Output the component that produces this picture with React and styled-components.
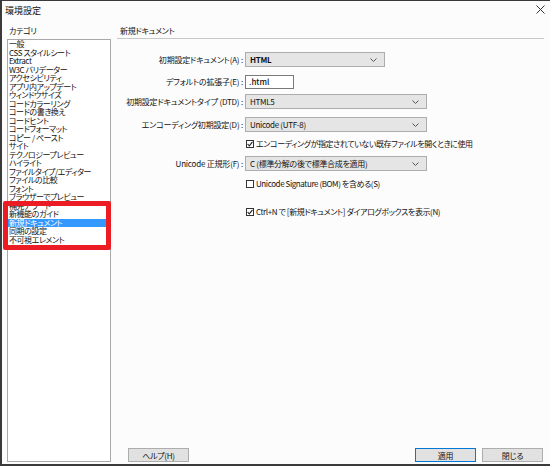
import React from 'react';
import styled, { createGlobalStyle } from 'styled-components';

const categories = [
  '一般',
  'CSS スタイルシート',
  'Extract',
  'W3C バリデーター',
  'アクセシビリティ',
  'アプリ内アップデート',
  'ウィンドウサイズ',
  'コードカラーリング',
  'コードの書き換え',
  'コードヒント',
  'コードフォーマット',
  'コピー / ペースト',
  'サイト',
  'テクノロジープレビュー',
  'ハイライト',
  'ファイルタイプ/エディター',
  'ファイルの比較',
  'フォント',
  'ブラウザーでプレビュー',
  '補完アラート',
  '新機能のガイド',
  '新規ドキュメント',
  '同期の設定',
  '不可視エレメント',
];

const SELECTED = '新規ドキュメント';

const Chevron = () => (
  <svg width="7" height="4" viewBox="0 0 7 4">
    <polyline points="0.5,0.5 3.5,3.5 6.5,0.5" fill="none" stroke="#555" strokeWidth="1" />
  </svg>
);

const Check = () => (
  <svg width="6" height="6" viewBox="0 0 6 6">
    <polyline points="0.6,3 2.3,4.9 5.5,0.8" fill="none" stroke="#222" strokeWidth="1.1" />
  </svg>
);

export default function App() {
  return (
    <>
      <GlobalStyle />
      <Window>
        <TitleBar>
          <WindowTitle>環境設定</WindowTitle>
          <CloseBox>
            <svg width="9" height="9" viewBox="0 0 9 9">
              <path d="M0.5 0.5 L8.5 8.5 M8.5 0.5 L0.5 8.5" stroke="#333" strokeWidth="1" />
            </svg>
          </CloseBox>
        </TitleBar>

        <Body>
          <Side>
            <SectionLabel>カテゴリ</SectionLabel>
            <ListBox>
              {categories.map((c) => (
                <Item key={c} $selected={c === SELECTED}>
                  {c}
                </Item>
              ))}
              <Marker />
            </ListBox>
          </Side>

          <Main>
            <PanelHeader>新規ドキュメント</PanelHeader>
            <Form>
              <Row $top={13}>
                <Label>初期設定ドキュメント(A) :</Label>
                <Select $w={140} $bold>
                  HTML
                  <Chevron />
                </Select>
              </Row>
              <Row $top={7}>
                <Label>デフォルトの拡張子(E) :</Label>
                <TextInput>.html</TextInput>
              </Row>
              <Row $top={5}>
                <Label>初期設定ドキュメントタイプ (DTD) :</Label>
                <Select $w={182}>
                  HTML5
                  <Chevron />
                </Select>
              </Row>
              <Row $top={8}>
                <Label>エンコーディング初期設定(D) :</Label>
                <Select $w={182}>
                  Unicode (UTF-8)
                  <Chevron />
                </Select>
              </Row>
              <Row $top={4}>
                <Spacer />
                <CheckItem>
                  <Box>
                    <Check />
                  </Box>
                  エンコーディングが指定されていない既存ファイルを開くときに使用
                </CheckItem>
              </Row>
              <Row $top={5}>
                <Label>Unicode 正規形(F) :</Label>
                <Select $w={182}>
                  C (標準分解の後で標準合成を適用)
                  <Chevron />
                </Select>
              </Row>
              <Row $top={5}>
                <Spacer />
                <CheckItem>
                  <Box />
                  Unicode Signature (BOM) を含める(S)
                </CheckItem>
              </Row>
              <Row $top={13}>
                <Spacer />
                <CheckItem>
                  <Box>
                    <Check />
                  </Box>
                  Ctrl+N で [新規ドキュメント] ダイアログボックスを表示(N)
                </CheckItem>
              </Row>
            </Form>

            <Buttons>
              <Button>ヘルプ(H)</Button>
              <Grow />
              <Button $primary>適用</Button>
              <Button>閉じる</Button>
            </Buttons>
          </Main>
        </Body>
      </Window>
    </>
  );
}

const GlobalStyle = createGlobalStyle`
  html, body {
    margin: 0;
    padding: 0;
    background: #ffffff;
  }
  body {
    font-family: "Noto Sans CJK JP", "Noto Sans", sans-serif;
    font-feature-settings: "palt";
    color: #111;
  }
`;

const Window = styled.div`
  box-sizing: border-box;
  width: 550px;
  height: 466px;
  background: #fcfcfc;
  border-top: 1px solid #3a3a3a;
  border-left: 2px solid #3a3a3a;
  border-bottom: 2px solid #3a3a3a;
  display: flex;
  flex-direction: column;
`;

const TitleBar = styled.div`
  height: 19px;
  display: flex;
  align-items: center;
  padding: 0 5px 0 3px;
`;

const WindowTitle = styled.div`
  font-size: 9px;
  line-height: 1;
  flex: 1;
`;

const CloseBox = styled.div`
  display: flex;
  align-items: center;
  margin-top: -2px;
`;

const Body = styled.div`
  display: flex;
  height: 442px;
`;

const Side = styled.div`
  width: 104px;
  margin-left: 5px;
  display: flex;
  flex-direction: column;
`;

const SectionLabel = styled.div`
  height: 19px;
  box-sizing: border-box;
  padding: 6px 0 0 2px;
  font-size: 8px;
  letter-spacing: -0.3px;
  line-height: 10px;
`;

const ListBox = styled.div`
  position: relative;
  flex: 1;
  background: #fff;
  border: 1px solid #a9a9a9;
`;

const Item = styled.div`
  height: 8.5px;
  line-height: 8.5px;
  font-size: 8px;
  letter-spacing: -0.45px;
  padding-left: 1px;
  white-space: nowrap;
  background: ${(p) => (p.$selected ? '#3399ff' : 'transparent')};
  color: ${(p) => (p.$selected ? '#ffffff' : '#111')};
`;

const Marker = styled.div`
  position: absolute;
  left: -5px;
  top: 161px;
  width: 108px;
  height: 49px;
  box-sizing: border-box;
  border: 5px solid #ec1c24;
  border-radius: 2px;
`;

const Main = styled.div`
  flex: 1;
  margin: 0 6px 0 6px;
  display: flex;
  flex-direction: column;
`;

const PanelHeader = styled.div`
  height: 19px;
  box-sizing: border-box;
  padding: 6px 0 0 3px;
  font-size: 8px;
  letter-spacing: -0.3px;
  line-height: 10px;
  border-bottom: 1px solid #c8c8c8;
`;

const Form = styled.div`
  flex: 1;
  display: flex;
  flex-direction: column;
`;

const Row = styled.div`
  display: flex;
  align-items: center;
  height: 15px;
  margin-top: ${(p) => p.$top}px;
`;

const Label = styled.div`
  width: 126px;
  flex: none;
  display: flex;
  justify-content: flex-end;
  white-space: nowrap;
  font-size: 8px;
  letter-spacing: -0.2px;
  margin-right: 2px;
`;

const Spacer = styled.div`
  width: 128px;
  flex: none;
`;

const Select = styled.div`
  box-sizing: border-box;
  width: ${(p) => p.$w}px;
  height: 15px;
  background: #e5e5e5;
  border: 1px solid #adadad;
  display: flex;
  align-items: center;
  justify-content: space-between;
  padding: 0 7px 0 4px;
  font-size: 8px;
  letter-spacing: -0.3px;
  font-weight: ${(p) => (p.$bold ? 700 : 400)};
  white-space: nowrap;
`;

const TextInput = styled.div`
  box-sizing: border-box;
  width: 49px;
  height: 14px;
  background: #fff;
  border: 1px solid #7a7a7a;
  padding-left: 3px;
  font-size: 8px;
  line-height: 12px;
  font-weight: 500;
`;

const CheckItem = styled.div`
  display: flex;
  align-items: center;
  gap: 2px;
  font-size: 8px;
  letter-spacing: -0.4px;
  white-space: nowrap;
  margin-left: 1px;
`;

const Box = styled.div`
  box-sizing: border-box;
  width: 8px;
  height: 8px;
  border: 1px solid #333;
  background: #fff;
  display: flex;
  align-items: center;
  justify-content: center;
`;

const Buttons = styled.div`
  display: flex;
  align-items: center;
  gap: 6px;
  padding: 0 1px 0 11px;
  height: 14px;
`;

const Grow = styled.div`
  flex: 1;
`;

const Button = styled.div`
  box-sizing: border-box;
  width: 61px;
  height: 14px;
  display: flex;
  align-items: center;
  justify-content: center;
  background: #e1e1e1;
  border: ${(p) => (p.$primary ? '1px solid #0078d7' : '1px solid #adadad')};
  font-size: 8px;
  letter-spacing: -0.3px;
`;
